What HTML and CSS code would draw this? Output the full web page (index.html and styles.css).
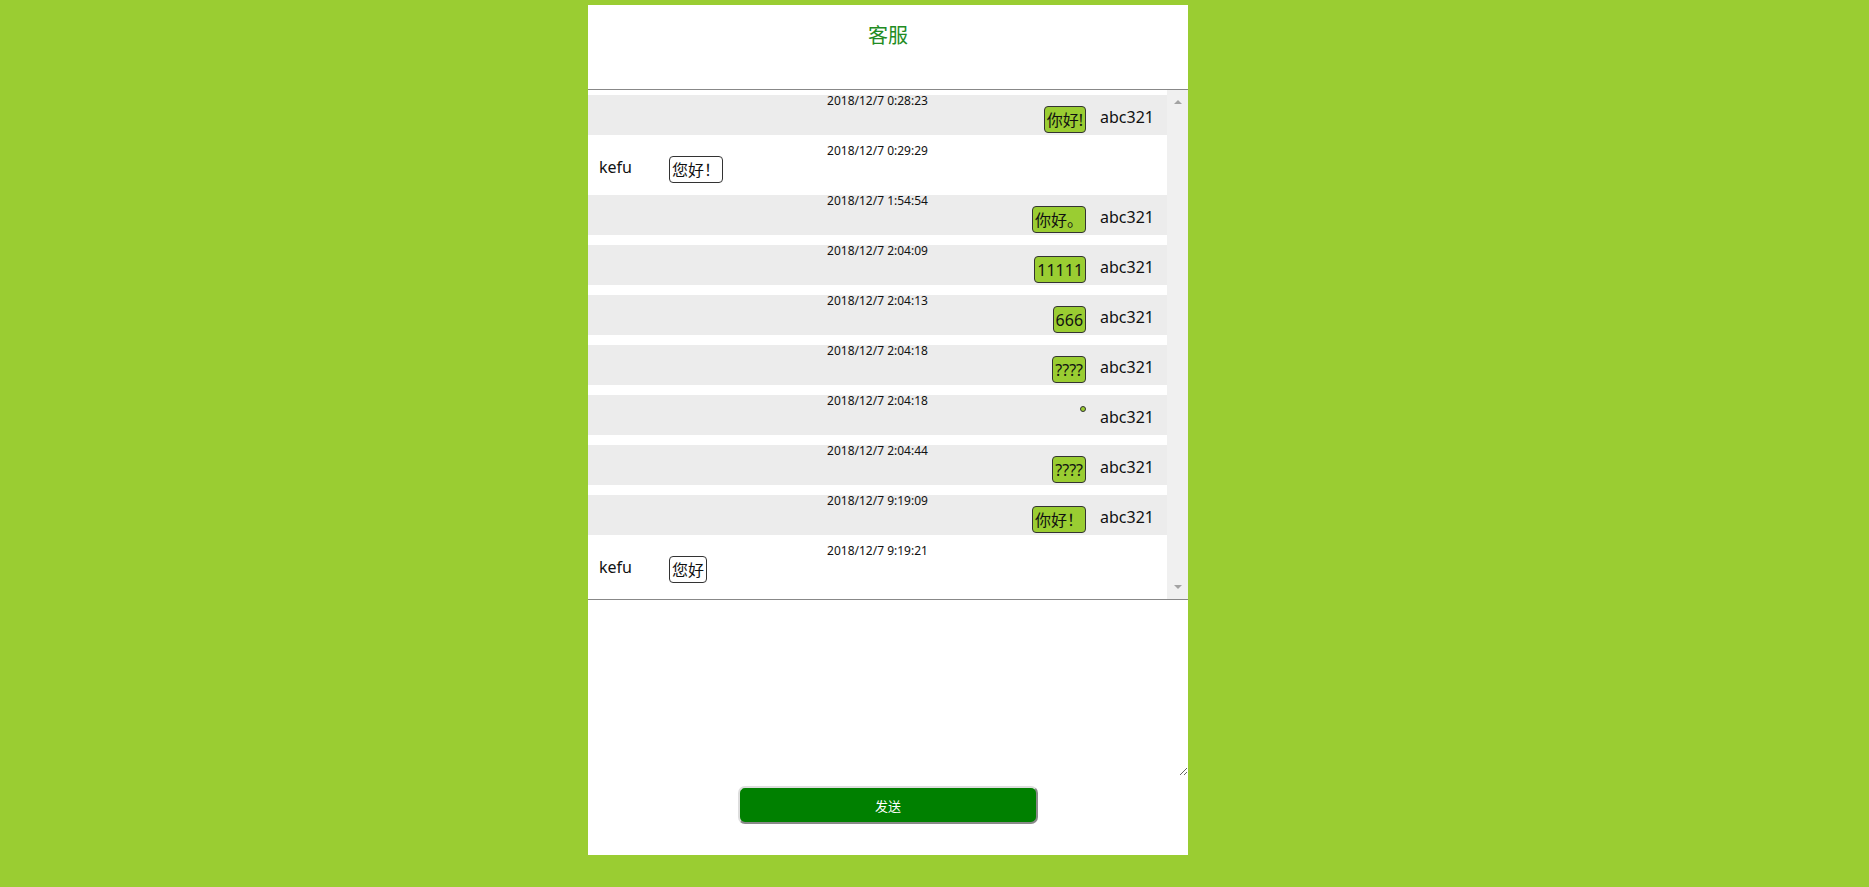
FILE: index.html
```html
<!DOCTYPE html>
<html lang="zh-CN">
<head>
<meta charset="utf-8">
<title>客服</title>
<link rel="stylesheet" href="styles.css">
</head>
<body>
<div class="panel">
  <div class="header"><h1 class="title">客服</h1></div>
  <div class="chat">
    <div class="messages">
      <div class="msg user"><div class="time">2018/12/7 0:28:23</div><div class="line"><span class="bubble">你好!</span><span class="name">abc321</span></div></div>
      <div class="msg kefu"><div class="time">2018/12/7 0:29:29</div><div class="line"><span class="name">kefu</span><span class="bubble">您好！</span></div></div>
      <div class="msg user"><div class="time">2018/12/7 1:54:54</div><div class="line"><span class="bubble">你好。</span><span class="name">abc321</span></div></div>
      <div class="msg user"><div class="time">2018/12/7 2:04:09</div><div class="line"><span class="bubble">11111</span><span class="name">abc321</span></div></div>
      <div class="msg user"><div class="time">2018/12/7 2:04:13</div><div class="line"><span class="bubble">666</span><span class="name">abc321</span></div></div>
      <div class="msg user"><div class="time">2018/12/7 2:04:18</div><div class="line"><span class="bubble">????</span><span class="name">abc321</span></div></div>
      <div class="msg user"><div class="time">2018/12/7 2:04:18</div><div class="line"><span class="bubble"></span><span class="name">abc321</span></div></div>
      <div class="msg user"><div class="time">2018/12/7 2:04:44</div><div class="line"><span class="bubble">????</span><span class="name">abc321</span></div></div>
      <div class="msg user"><div class="time">2018/12/7 9:19:09</div><div class="line"><span class="bubble">你好！</span><span class="name">abc321</span></div></div>
      <div class="msg kefu"><div class="time">2018/12/7 9:19:21</div><div class="line"><span class="name">kefu</span><span class="bubble">您好</span></div></div>
    </div>
    <div class="scrollbar"><span class="arrow up"></span><span class="arrow down"></span></div>
  </div>
  <textarea class="input"></textarea>
  <button class="send" type="button">发送</button>
</div>
</body>
</html>
```

FILE: styles.css
```css
html, body {
  margin: 0;
  padding: 0;
  background: #9acd32;
}
body {
  font-family: "Noto Sans", "Noto Sans CJK SC", sans-serif;
  color: #111;
}
.panel {
  width: 600px;
  margin: 5px 0 0 588px;
  background: #fff;
  display: flex;
  flex-direction: column;
  padding-bottom: 31px;
}
.header {
  height: 84px;
  border-bottom: 1px solid #888;
  box-sizing: content-box;
}
.title {
  margin: 0;
  padding-top: 16px;
  font-size: 20px;
  line-height: 28px;
  font-weight: normal;
  color: #228b22;
  text-align: center;
  font-family: "Noto Sans CJK SC", sans-serif;
}
.chat {
  height: 509px;
  border-bottom: 1px solid #888;
  display: flex;
}
.messages {
  flex: 1;
  padding-top: 5px;
  overflow: hidden;
}
.msg {
  height: 40px;
  margin-bottom: 10px;
}
.msg.user {
  background: #ececec;
}
.time {
  font-size: 12px;
  line-height: 11px;
  text-align: center;
  color: #111;
}
.line {
  display: flex;
  align-items: flex-start;
}
.user .line {
  justify-content: flex-end;
  padding-right: 13px;
}
.kefu .line {
  padding-left: 11px;
}
.name {
  font-size: 16px;
  line-height: 23px;
}
.user .name {
  margin-left: 14px;
}
.kefu .name {
  width: 70px;
}
.bubble {
  font-size: 16px;
  line-height: 21px;
  padding: 3px 2px 1px;
  border: 1px solid #333;
  border-radius: 4px;
}
.user .bubble {
  background: #9acd32;
}
.kefu .bubble {
  background: #fff;
}
.scrollbar {
  width: 21px;
  background: #f0f0f0;
  display: flex;
  flex-direction: column;
  justify-content: space-between;
  align-items: center;
  padding: 10px 0;
  box-sizing: border-box;
}
.arrow {
  width: 0;
  height: 0;
  border-left: 4px solid transparent;
  border-right: 4px solid transparent;
}
.arrow.up {
  border-bottom: 4px solid #a3a3a3;
}
.arrow.down {
  border-top: 4px solid #a3a3a3;
}
.input {
  display: block;
  width: 100%;
  height: 176px;
  box-sizing: border-box;
  border: none;
  outline: none;
  margin: 0;
  padding: 2px;
  font-family: "Noto Sans", "Noto Sans CJK SC", sans-serif;
}
.send {
  display: block;
  width: 300px;
  height: 38px;
  box-sizing: border-box;
  margin: 10px auto 0;
  background: #008000;
  color: #fff;
  border: 2px outset #dddddd;
  border-radius: 7px;
  font-size: 13px;
  font-family: "Noto Sans CJK SC", sans-serif;
  padding: 0;
}
```
